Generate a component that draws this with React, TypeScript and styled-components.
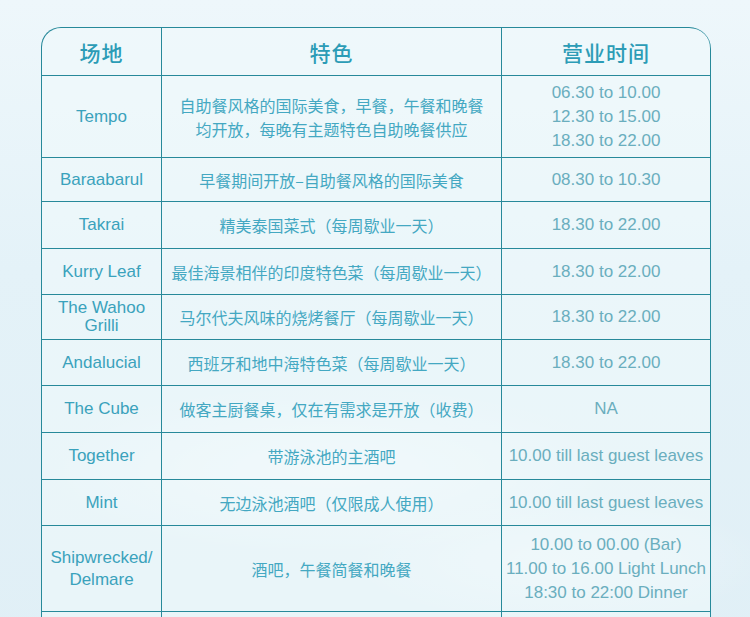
import React from 'react'
import styled, { createGlobalStyle } from 'styled-components'

const GlobalStyle = createGlobalStyle`
  html, body {
    margin: 0;
    padding: 0;
  }
  body {
    background: #e3f1f7;
    font-family: 'Liberation Sans', 'Noto Sans CJK SC', sans-serif;
    overflow: hidden;
  }
`

interface Venue {
  name: string[]
  desc: string[]
  hours: string[]
  h: number
  tight?: boolean
}

const venues: Venue[] = [
  {
    name: ['Tempo'],
    desc: ['自助餐风格的国际美食，早餐，午餐和晚餐', '均开放，每晚有主题特色自助晚餐供应'],
    hours: ['06.30 to 10.00', '12.30 to 15.00', '18.30 to 22.00'],
    h: 82
  },
  { name: ['Baraabarul'], desc: ['早餐期间开放–自助餐风格的国际美食'], hours: ['08.30 to 10.30'], h: 44 },
  { name: ['Takrai'], desc: ['精美泰国菜式（每周歇业一天）'], hours: ['18.30 to 22.00'], h: 47 },
  { name: ['Kurry Leaf'], desc: ['最佳海景相伴的印度特色菜（每周歇业一天）'], hours: ['18.30 to 22.00'], h: 46 },
  {
    name: ['The Wahoo', 'Grilli'],
    desc: ['马尔代夫风味的烧烤餐厅（每周歇业一天）'],
    hours: ['18.30 to 22.00'],
    h: 45,
    tight: true
  },
  { name: ['Andalucial'], desc: ['西班牙和地中海特色菜（每周歇业一天）'], hours: ['18.30 to 22.00'], h: 46 },
  { name: ['The Cube'], desc: ['做客主厨餐桌，仅在有需求是开放（收费）'], hours: ['NA'], h: 47 },
  { name: ['Together'], desc: ['带游泳池的主酒吧'], hours: ['10.00 till last guest leaves'], h: 47 },
  { name: ['Mint'], desc: ['无边泳池酒吧（仅限成人使用）'], hours: ['10.00 till last guest leaves'], h: 46 },
  {
    name: ['Shipwrecked/', 'Delmare'],
    desc: ['酒吧，午餐简餐和晚餐'],
    hours: ['10.00 to 00.00 (Bar)', '11.00 to 16.00 Light Lunch', '18:30 to 22:00 Dinner'],
    h: 86
  },
  { name: [], desc: [], hours: [], h: 60 }
]

const App: React.FC = () => {
  return (
    <>
      <GlobalStyle />
      <Page>
        <Table>
          <HeadCell>场地</HeadCell>
          <HeadCell>特色</HeadCell>
          <HeadCell $last>营业时间</HeadCell>
          {venues.map((v, i) => (
            <React.Fragment key={i}>
              <NameCell $tight={v.tight} style={{ height: v.h }}>
                {v.name.map(line => (
                  <Line key={line}>{line}</Line>
                ))}
              </NameCell>
              <DescCell style={{ height: v.h }}>
                {v.desc.map(line => (
                  <Line key={line}>{line}</Line>
                ))}
              </DescCell>
              <HoursCell style={{ height: v.h }}>
                {v.hours.map(line => (
                  <Line key={line}>{line}</Line>
                ))}
              </HoursCell>
            </React.Fragment>
          ))}
        </Table>
      </Page>
    </>
  )
}

const Page = styled.div`
  min-height: 617px;
  padding: 27px 0 0 41px;
  box-sizing: border-box;
  background:
    radial-gradient(ellipse 420px 120px at 330px 470px, rgba(255, 255, 255, 0.55), rgba(255, 255, 255, 0) 70%),
    radial-gradient(ellipse 300px 90px at 560px 560px, rgba(255, 255, 255, 0.4), rgba(255, 255, 255, 0) 70%),
    linear-gradient(180deg, #eef7fb 0%, #e4f2f8 40%, #e0eff6 100%);
`

const Table = styled.div`
  display: grid;
  grid-template-columns: 120px 340px 209px;
  width: 670px;
  border-top: 1.5px solid #27899a;
  border-left: 1.5px solid #27899a;
  border-radius: 20px 22px 0 0;
  overflow: hidden;
  box-sizing: border-box;
  background: rgba(240, 249, 252, 0.55);
`

const Cell = styled.div`
  display: flex;
  flex-direction: column;
  align-items: center;
  justify-content: center;
  text-align: center;
  border-right: 1.5px solid #27899a;
  border-bottom: 1.5px solid #27899a;
  box-sizing: border-box;
  font-size: 17px;
  line-height: 24px;
`

const HeadCell = styled(Cell)<{ $last?: boolean }>`
  height: 48px;
  font-family: 'Noto Sans CJK SC', sans-serif;
  font-size: 21px;
  font-weight: 500;
  color: #2c9cb6;
  letter-spacing: 1px;
  border-top-right-radius: ${p => (p.$last ? '20px' : '0')};
`

const NameCell = styled(Cell)<{ $tight?: boolean }>`
  color: #3aa2bc;
  line-height: ${p => (p.$tight ? '18px' : '22px')};
`

const DescCell = styled(Cell)`
  font-family: 'Noto Sans CJK SC', sans-serif;
  font-size: 16px;
  color: #44a8c2;
`

const HoursCell = styled(Cell)`
  color: #6aaebe;
`

const Line = styled.span`
  display: block;
  white-space: nowrap;
`

export default App
